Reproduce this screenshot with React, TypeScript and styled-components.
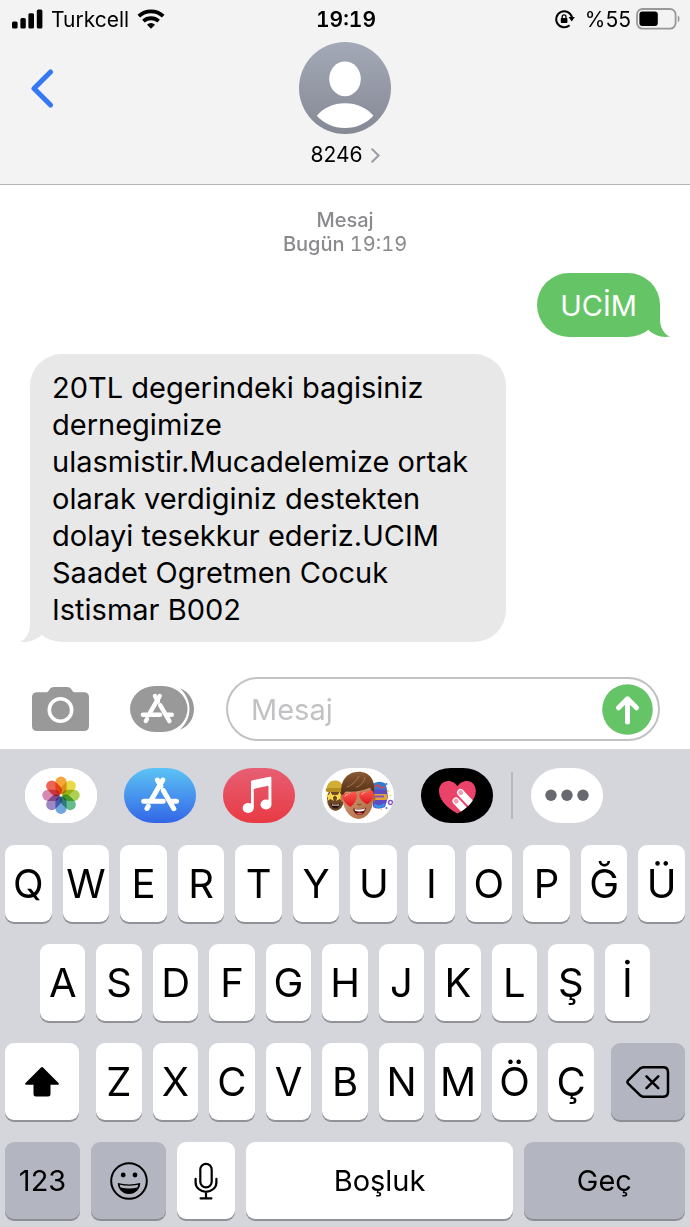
import React from "react";
import styled, { createGlobalStyle } from "styled-components";

const GlobalStyle = createGlobalStyle`
  * { box-sizing: border-box; }
  body { margin: 0; background: #fff; }
  button, input { font: inherit; color: inherit; }
  button { margin: 0; padding: 0; border: 0; background: none; cursor: pointer; }
  svg { display: block; flex: none; }
`;

const Screen = styled.div`
  font-family: Inter, "Liberation Sans", sans-serif;
  color: #000;
  background: #fff;
  min-width: 560px;
`;

/* ---------- header ---------- */

const Header = styled.header`
  background: #f3f3f3;
  border-bottom: 1px solid #b4b4b6;
`;

const StatusBar = styled.div`
  display: grid;
  grid-template-columns: 1fr auto 1fr;
  align-items: center;
  height: 38px;
  padding: 0 10px 0 12px;
  font-size: 21px;
`;

const StatusGroup = styled.div<{ $end?: boolean }>`
  display: flex;
  align-items: center;
  justify-content: ${(p) => (p.$end ? "flex-end" : "flex-start")};
  gap: ${(p) => (p.$end ? 5 : 8)}px;
`;

const Clock = styled.time`
  font-weight: 600;
  font-variant-numeric: tabular-nums;
`;

const LockSlot = styled.span`
  padding-right: 5px;
`;

const ContactBar = styled.div`
  display: grid;
  grid-template-columns: 1fr auto 1fr;
  height: 146px;
  padding-top: 4px;
`;

const BackButton = styled.button`
  justify-self: start;
  align-self: start;
  padding: 26px 30px;
`;

const Contact = styled.button`
  display: flex;
  flex-direction: column;
  align-items: center;
  gap: 9px;
  align-self: start;
`;

const ContactName = styled.span`
  display: flex;
  align-items: center;
  gap: 8px;
  font-size: 21px;
  line-height: 24px;
`;

/* ---------- conversation ---------- */

const Conversation = styled.main`
  display: flex;
  flex-direction: column;
  padding: 23px 30px 35px;
  gap: 17px;
`;

const Stamp = styled.p`
  margin: 0;
  text-align: center;
  color: #8a8a8e;
  font-size: 20px;
  line-height: 24px;
  font-variant-numeric: tabular-nums;
`;

const StampStrong = styled.span`
  font-weight: 500;
`;

const Bubble = styled.div<{ $sent?: boolean }>`
  position: relative;
  align-self: ${(p) => (p.$sent ? "flex-end" : "flex-start")};
  max-width: 476px;
  padding: ${(p) => (p.$sent ? "14px 23px 13px" : "15px 22px 14px")};
  border-radius: 32px;
  background: ${(p) => (p.$sent ? "#65c466" : "#e8e8e9")};
  color: ${(p) => (p.$sent ? "#fff" : "#000")};
  font-size: 29px;
  line-height: 37px;
`;

const Tail = styled.svg<{ $sent?: boolean }>`
  position: absolute;
  bottom: 0;
  ${(p) => (p.$sent ? "right: -10px;" : "left: -10px; transform: scaleX(-1);")}
`;

/* ---------- composer ---------- */

const Composer = styled.form`
  display: flex;
  align-items: center;
  padding: 0 30px 8px 32px;
`;

const ComposerButton = styled.button<{ $gap: number }>`
  margin-right: ${(p) => p.$gap}px;
`;

const Field = styled.div`
  flex: 1;
  min-width: 0;
  display: flex;
  align-items: center;
  height: 64px;
  padding: 0 5px 0 23px;
  border: 2px solid #c2c2c4;
  border-radius: 32px;
`;

const MessageInput = styled.input`
  flex: 1;
  min-width: 0;
  padding: 0;
  border: 0;
  outline: 0;
  background: none;
  font-size: 29px;
  line-height: 37px;
  &::placeholder {
    color: #c2c2c4;
    opacity: 1;
  }
`;

/* ---------- keyboard ---------- */

const Keyboard = styled.section`
  background: #d5d6dc;
  padding: 19px 5px 8px;
`;

const AppStrip = styled.nav`
  display: flex;
  align-items: center;
  gap: 27px;
  padding: 0 20px;
  margin-bottom: 22px;
`;

const AppButton = styled.button<{ $fill: string }>`
  width: 72px;
  height: 55px;
  border-radius: 30px / 27px;
  overflow: hidden;
  background: ${(p) => p.$fill};
`;

const MoreGroup = styled.div`
  display: flex;
  align-items: center;
  gap: 18px;
  margin-left: -9px;
`;

const Divider = styled.span`
  width: 2px;
  height: 47px;
  background: #b7b8bf;
`;

const Keys = styled.div`
  display: flex;
  flex-direction: column;
  gap: 22px;
`;

const KeyRow = styled.div<{ $inset?: number }>`
  display: flex;
  gap: 11px;
  padding: 0 ${(p) => p.$inset ?? 0}px;
`;

const LetterGroup = styled.div`
  flex: 497;
  display: flex;
  gap: 11px;
  margin: 0 6px;
`;

const Key = styled.button<{ $grow?: number; $dark?: boolean; $label?: boolean }>`
  flex: ${(p) => p.$grow ?? 1} 1 0;
  min-width: 0;
  display: flex;
  align-items: center;
  justify-content: center;
  height: 77px;
  border-radius: 9px;
  background: ${(p) => (p.$dark ? "#b3b6c0" : "#fff")};
  box-shadow: 0 2px 0 ${(p) => (p.$dark ? "#8d8f96" : "#919297")};
  font-size: ${(p) => (p.$label ? 29 : 40)}px;
`;

/* ---------- drawings ---------- */

const SignalIcon = () => (
  <svg width="31" height="20" viewBox="0 0 31 20" aria-hidden="true">
    <rect x="0" y="12.5" width="5.6" height="7" rx="1.5" />
    <rect x="8.4" y="9" width="5.4" height="10.5" rx="1.5" />
    <rect x="16.4" y="4.3" width="5.6" height="15.2" rx="1.5" />
    <rect x="24.8" y="0.4" width="5.6" height="19.1" rx="1.5" />
  </svg>
);

const WifiIcon = () => (
  <svg width="28" height="20" viewBox="0 0 28 20" aria-hidden="true">
    <g fill="none" stroke="#000" strokeWidth="3.8">
      <path d="M1.800 7.200a18 18 0 0 1 24.400 0" />
      <path d="M6.400 12.200a11.200 11.200 0 0 1 15.200 0" />
    </g>
    <path d="M14 19.800l-4-4.100a5.800 5.800 0 0 1 8 0z" />
  </svg>
);

const RotationLockIcon = () => (
  <svg width="20" height="20" viewBox="0 0 20 20" aria-hidden="true">
    <path d="M14.6 16.2A8 8 0 1 1 17 8.4" fill="none" stroke="#000" strokeWidth="2" />
    <path d="M13.6 8h6.2l-3.1 4.4z" />
    <rect x="5.8" y="9" width="6.6" height="5" rx=".8" />
    <path d="M7.2 9.4V7.7a1.9 1.9 0 0 1 3.8 0v1.7" fill="none" stroke="#000" strokeWidth="1.3" />
  </svg>
);

const BatteryIcon = () => (
  <svg width="44" height="22" viewBox="0 0 44 22" aria-hidden="true">
    <rect x="1" y="1" width="38.6" height="19.6" rx="5.5" fill="none" stroke="#98989a" strokeWidth="1.8" />
    <rect x="3.4" y="3.6" width="18.4" height="14.4" rx="3" />
    <path d="M41.8 7.6c2.3 1 2.3 5.6 0 6.6z" fill="#98989a" />
  </svg>
);

const BackIcon = () => (
  <svg width="24" height="40" viewBox="0 0 24 40" fill="none" stroke="#3478f6" strokeWidth="5" strokeLinecap="round" strokeLinejoin="round" aria-hidden="true">
    <path d="M20.5 4L4 20.4 20.5 37" />
  </svg>
);

const AvatarIcon = () => (
  <svg width="92" height="92" viewBox="0 0 92 92" aria-hidden="true">
    <defs>
      <linearGradient id="avatar" x1="0" y1="0" x2="0" y2="1">
        <stop offset="0" stopColor="#a4a9b7" />
        <stop offset="1" stopColor="#858994" />
      </linearGradient>
    </defs>
    <circle cx="46" cy="46" r="46" fill="url(#avatar)" />
    <ellipse cx="46" cy="36.8" rx="15.8" ry="17.4" fill="#fff" />
    <path d="M17.8 73.8C24 66 34 61.2 46 61.2S68 66 74.4 73.8C67 81.6 57.500 86 46 86S25 81.600 17.800 73.800z" fill="#fff" />
  </svg>
);

const DisclosureIcon = () => (
  <svg width="9" height="15" viewBox="0 0 9 15" fill="none" stroke="#9a9ca3" strokeWidth="2" strokeLinecap="round" aria-hidden="true">
    <path d="M1.2 1.2L7.600 7.500 1.200 13.800" />
  </svg>
);

const BubbleTail = ({ sent }: { sent?: boolean }) => (
  <Tail $sent={sent} width="24" height="34" viewBox="0 0 24 34" aria-hidden="true">
    <path d="M14 0V16C14 24 17.500 31 24 33.600C15 35.200 7.500 31.500 2.500 27L0 18L8 0z" fill={sent ? "#65c466" : "#e8e8e9"} />
  </Tail>
);

const CameraIcon = () => (
  <svg width="57" height="44" viewBox="0 0 57 44" aria-hidden="true">
    <path d="M5 5.200h9.500c1.400 0 1.800-.8 2.800-2.400C18.500 1 19.500 0 22 0h13c2.500 0 3.500 1 4.700 2.800 1 1.600 1.400 2.400 2.800 2.400H52c3.200 0 5 1.800 5 5V39c0 3.200-1.800 5-5 5H5c-3.200 0-5-1.800-5-5V10.200c0-3.200 1.800-5 5-5z" fill="#999" />
    <circle cx="28.500" cy="23" r="11.200" fill="none" stroke="#fff" strokeWidth="3.600" />
  </svg>
);

const StoreMark = () => (
  <g fill="none" stroke="#fff" strokeWidth="5" strokeLinecap="round">
    <path d="M38.800 12L27.800 31" />
    <path d="M24.300 38.200l-1.300 2.300" />
    <path d="M19.700 33.300h19.500M47.800 33.300h4.700" />
    <path d="M33.400 12l3.400 6.200M39.300 22.500L49.800 40.700" />
  </g>
);

const AppsToggleIcon = () => (
  <svg width="65" height="46" viewBox="0 0 65 46" aria-hidden="true">
    <path d="M50 2.200C58.500 5.500 64 13.500 64 23S58.500 40.500 50 43.800C56 38 59.500 31 59.500 23S56 8 50 2.200z" fill="#999" />
    <rect width="57.500" height="46" rx="25" ry="23" fill="#999" />
    <g transform="translate(-4.400 -.6) scale(.88)">
      <StoreMark />
    </g>
  </svg>
);

const SendIcon = () => (
  <svg width="51" height="51" viewBox="0 0 51 51" aria-hidden="true">
    <circle cx="25.500" cy="25.500" r="25.300" fill="#65c466" />
    <path d="M25.500 38V15M16.500 23.800l9-9 9 9" fill="none" stroke="#fff" strokeWidth="5" strokeLinecap="round" strokeLinejoin="round" />
  </svg>
);

const PETALS = ["#f29a1f", "#e2d52b", "#a1c938", "#4fb37c", "#5b9bd8", "#8d78bd", "#d07aa8", "#ea4d3d"];

const Petal = styled.rect`
  mix-blend-mode: multiply;
`;

const PhotosIcon = () => (
  <svg width="72" height="55" viewBox="0 0 72 55" aria-hidden="true">
    <rect width="72" height="55" fill="#fff" />
    <g transform="translate(36 27.300)">
      {PETALS.map((color, i) => (
        <Petal key={color} x="-5.600" y="-18.700" width="11.200" height="17.600" rx="5.600" fill={color} fillOpacity=".88" transform={`rotate(${i * 45})`} />
      ))}
    </g>
  </svg>
);

const StoreIcon = () => (
  <svg width="72" height="55" viewBox="0 0 72 55" aria-hidden="true">
    <StoreMark />
  </svg>
);

const MusicIcon = () => (
  <svg width="72" height="55" viewBox="0 0 72 55" fill="#fff" aria-hidden="true">
    <path d="M28 14.200c0-1.100.6-1.700 1.700-1.900L46.800 8.700c1-.2 1.600.3 1.600 1.300V35.500h-2.900V17.700L30.800 20.900V39.500H28z" />
    <ellipse cx="25.200" cy="40" rx="5.600" ry="5" />
    <ellipse cx="43" cy="36.500" rx="5.500" ry="5" />
  </svg>
);

const MemojiIcon = () => (
  <svg width="72" height="55" viewBox="0 0 72 55" aria-hidden="true">
    <defs>
      <linearGradient id="skin" x1="0" y1="0" x2="1" y2="1">
        <stop offset="0" stopColor="#d9a07a" />
        <stop offset="1" stopColor="#a9683f" />
      </linearGradient>
      <linearGradient id="hair" x1="0" y1="0" x2="0" y2="1">
        <stop offset="0" stopColor="#8a5a34" />
        <stop offset="1" stopColor="#4f2d17" />
      </linearGradient>
      <linearGradient id="love" x1="0" y1="0" x2="0" y2="1">
        <stop offset="0" stopColor="#ff5a4d" />
        <stop offset="1" stopColor="#dc1420" />
      </linearGradient>
    </defs>
    <ellipse cx="13.500" cy="31" rx="8.500" ry="11.800" fill="#6b4526" />
    <path d="M4.500 22C4.500 15.500 8.500 12.500 13 12.500S21 15 21.500 22z" fill="#d2ac35" />
    <rect x="3.600" y="20" width="18" height="4" rx="2" fill="#b48d22" />
    <path d="M8.500 23.500l1.500 3.200 3.400.3-2.500 2.400.8 3.500-3.200-1.800-3.200 1.800.8-3.500-2.700-2.400 3.600-.3zM17.500 23.500l1.500 3.200 3.400.3-2.500 2.400.8 3.500-3.200-1.800-3.200 1.800.8-3.500-2.500-2.400 3.400-.3z" fill="#f7d84c" />
    <path d="M8.500 35.500q5 2 9.500 0-1 5-4.500 5t-5-5z" fill="#2c130c" />
    <path d="M10 36.200q3.500 1 7 0v1.300h-7z" fill="#fff" />
    <path d="M51 17q7-5 13 0l2 12-3 10q-7 3-12 0z" fill="#5c4cc4" />
    <path d="M51 15.500q7-3.500 12.500 0l1 6H51z" fill="#2f7fd0" />
    <path d="M52 19l4-2 3 3 4-1" stroke="#e83e54" strokeWidth="1.500" fill="none" />
    <rect x="50" y="26" width="15.500" height="6" rx="2" fill="#e8a233" />
    <rect x="52" y="27.500" width="10" height="2" fill="#7d55c7" />
    <path d="M52 37q6 4 11-1" stroke="#3a8de2" strokeWidth="3" fill="none" />
    <circle cx="68.500" cy="34.500" r="2" fill="none" stroke="#8a52c8" strokeWidth="1.500" />
    <circle cx="64.500" cy="16" r="1" fill="#3f74de" />
    <circle cx="66" cy="23" r="1" fill="#f0cf31" />
    <circle cx="68.500" cy="27.500" r=".8" fill="#f0cf31" />
    <circle cx="64.500" cy="40" r="1" fill="#3f74de" />
    <circle cx="59.500" cy="41.500" r=".8" fill="#f0cf31" />
    <ellipse cx="20.800" cy="30" rx="2.400" ry="4" fill="#b97a50" />
    <ellipse cx="51" cy="30" rx="2.400" ry="4" fill="#a9683f" />
    <path d="M21 21q15-12 30 0v12c0 9-7 18-14.500 18S21.500 42 21 33z" fill="url(#skin)" />
    <path d="M19.500 27C17.500 13 25 4 36.500 3.800 47.500 3.800 54.500 12 51.500 27l-2-1.500Q50 22 48 19.500 38 24.500 24 23.500q-2 1-2.500 3.500z" fill="url(#hair)" />
    <path d="M25 19Q33 16 37 8M34 19.500Q42 16 43 9" stroke="#a8754a" strokeWidth="1" fill="none" />
    <path d="M28.600 39C24 36 20.800 32.500 20.500 29c-.2-4 5-5.500 7-2 1.400-4 7-4.500 7.500.3.300 4-3 8.700-6.400 11.700z" fill="url(#love)" />
    <path d="M45.200 36.500C41 34 37.600 31 37.200 27.500c-.4-4.200 5-5.500 7-2.200 1.300-4 7-4.200 7.500.5.300 4-3 8-6.500 10.700z" fill="url(#love)" />
    <path d="M23 28.500q.5-2.500 2.500-2M40 26.500q.5-2.500 2.500-2" stroke="#ffaba2" strokeWidth="1" fill="none" strokeLinecap="round" />
    <path d="M35.500 36q1.800 1.500 3.800 0" stroke="#8b4d2c" strokeWidth="1.200" fill="none" />
    <path d="M31 40.500q7 2 13-1-1 7.500-6.500 7.500T31 40.500z" fill="#5d1717" />
    <path d="M32.500 41q6 1.500 10.500-.700l-.6 2.200q-5 1.800-9.300.3z" fill="#fff" />
    <path d="M34.500 45.500q3-1.500 6 0-2.500 1.800-6 0z" fill="#ec6470" />
  </svg>
);

const TouchIcon = () => (
  <svg width="72" height="55" viewBox="0 0 72 55" aria-hidden="true">
    <defs>
      <clipPath id="heart">
        <path d="M36.500 45.500C28 41 18 33 18 23c0-6.500 4.500-10 9-10 4.300 0 7.600 2.500 9.500 5.200C38.400 15.500 41.500 13 46 13c5 0 8.800 4 8.800 10 0 10-9.800 18-18.300 22.500z" />
      </clipPath>
    </defs>
    <g clipPath="url(#heart)">
      <rect width="72" height="55" fill="#eb4269" />
      <g transform="rotate(-43 39.500 24.500)">
        <rect x="36" y="21" width="7" height="30" rx="3.500" fill="#fff" />
        <rect x="37.300" y="22.200" width="4.400" height="5" rx="2" fill="#f59bae" />
      </g>
      <g transform="rotate(-43 35 33)">
        <rect x="31.500" y="29.500" width="7" height="30" rx="3.500" fill="#fff" />
        <rect x="32.800" y="30.700" width="4.400" height="5" rx="2" fill="#f59bae" />
      </g>
    </g>
  </svg>
);

const MoreIcon = () => (
  <svg width="72" height="55" viewBox="0 0 72 55" fill="#68696f" aria-hidden="true">
    <circle cx="20" cy="27.300" r="5.700" />
    <circle cx="36" cy="27.300" r="5.700" />
    <circle cx="52" cy="27.300" r="5.700" />
  </svg>
);

const ShiftIcon = () => (
  <svg width="36" height="32" viewBox="0 0 36 32" aria-hidden="true">
    <path d="M17 1.500q1-1 2 0L34.500 17q1 1.800-1 1.800h-7V28q0 2.500-2.500 2.500H12q-2.500 0-2.500-2.500v-9.200h-7q-2 0-1-1.800z" />
  </svg>
);

const BackspaceIcon = () => (
  <svg width="44" height="32" viewBox="0 0 44 32" fill="none" stroke="#000" strokeWidth="2.500" strokeLinecap="round" strokeLinejoin="round" aria-hidden="true">
    <path d="M14.500 2.200Q16 1.200 18 1.200h19q5 0 5 5v19.600q0 5-5 5H18q-2 0-3.500-1.200L2.200 17.600q-1.500-1.600 0-3.200z" />
    <path d="M20.500 10.300l11.800 11.800M32.300 10.300L20.500 22.100" />
  </svg>
);

const SmileyIcon = () => (
  <svg width="38" height="38" viewBox="0 0 38 38" aria-hidden="true">
    <circle cx="19" cy="19" r="17.800" fill="none" stroke="#000" strokeWidth="2" />
    <circle cx="13.200" cy="13" r="2.400" />
    <circle cx="25" cy="13" r="2.400" />
    <path d="M7.800 21q11 2.800 22.400 0c.2 6-4.700 11-11.200 11S7.800 27 7.800 21z" />
    <path d="M9.800 22.800q9.200 1.900 18.400 0-.2 1.500-.9 2.800-8.300 1.800-16.600 0-.8-1.400-.9-2.800z" fill="#b3b6c0" />
  </svg>
);

const MicIcon = () => (
  <svg width="24" height="38" viewBox="0 0 24 38" fill="none" stroke="#000" strokeWidth="2.200" strokeLinecap="round" aria-hidden="true">
    <rect x="6.300" y="1.800" width="11.400" height="23.600" rx="5.700" />
    <path d="M1.600 16.800v3.600a10.400 9.400 0 0 0 20.800 0v-3.600M12 30v6M6.600 36.400h10.800" />
  </svg>
);

/* ---------- page ---------- */

const ROW_TOP = ["Q", "W", "E", "R", "T", "Y", "U", "I", "O", "P", "Ğ", "Ü"];
const ROW_HOME = ["A", "S", "D", "F", "G", "H", "J", "K", "L", "Ş", "İ"];
const ROW_BOTTOM = ["Z", "X", "C", "V", "B", "N", "M", "Ö", "Ç"];

const APPS = [
  { name: "Fotoğraflar", fill: "#fff", Icon: PhotosIcon },
  { name: "App Store", fill: "linear-gradient(#5cc3f5, #3366e6)", Icon: StoreIcon },
  { name: "Müzik", fill: "linear-gradient(#e75f73, #e83a44)", Icon: MusicIcon },
  { name: "Memoji", fill: "#fff", Icon: MemojiIcon },
  { name: "Digital Touch", fill: "#000", Icon: TouchIcon },
];

const Letters = ({ letters }: { letters: string[] }) => (
  <>
    {letters.map((letter) => (
      <Key key={letter} type="button">{letter}</Key>
    ))}
  </>
);

export default function App() {
  return (
    <Screen lang="tr">
      <GlobalStyle />
      <Header>
        <StatusBar>
          <StatusGroup>
            <SignalIcon />
            <span>Turkcell</span>
            <WifiIcon />
          </StatusGroup>
          <Clock>19:19</Clock>
          <StatusGroup $end>
            <LockSlot><RotationLockIcon /></LockSlot>
            <span>%55</span>
            <BatteryIcon />
          </StatusGroup>
        </StatusBar>
        <ContactBar>
          <BackButton type="button" aria-label="Geri"><BackIcon /></BackButton>
          <Contact type="button">
            <AvatarIcon />
            <ContactName>
              8246
              <DisclosureIcon />
            </ContactName>
          </Contact>
        </ContactBar>
      </Header>

      <Conversation>
        <Stamp>
          <StampStrong>Mesaj</StampStrong>
          <br />
          <StampStrong>Bugün</StampStrong> 19:19
        </Stamp>
        <Bubble $sent>
          UCİM
          <BubbleTail sent />
        </Bubble>
        <Bubble>
          20TL degerindeki bagisiniz dernegimize ulasmistir.Mucadelemize ortak olarak verdiginiz destekten dolayi tesekkur ederiz.UCIM Saadet Ogretmen Cocuk Istismar B002
          <BubbleTail />
        </Bubble>
      </Conversation>

      <Composer onSubmit={(e) => e.preventDefault()}>
        <ComposerButton type="button" $gap={41} aria-label="Kamera"><CameraIcon /></ComposerButton>
        <ComposerButton type="button" $gap={31} aria-label="Uygulamalar"><AppsToggleIcon /></ComposerButton>
        <Field>
          <MessageInput type="text" placeholder="Mesaj" aria-label="Mesaj" />
          <button type="submit" aria-label="Gönder"><SendIcon /></button>
        </Field>
      </Composer>

      <Keyboard aria-label="Klavye">
        <AppStrip aria-label="iMessage uygulamaları">
          {APPS.map(({ name, fill, Icon }) => (
            <AppButton key={name} type="button" $fill={fill} aria-label={name}><Icon /></AppButton>
          ))}
          <MoreGroup>
            <Divider />
            <AppButton type="button" $fill="#fff" aria-label="Daha fazla"><MoreIcon /></AppButton>
          </MoreGroup>
        </AppStrip>
        <Keys>
          <KeyRow><Letters letters={ROW_TOP} /></KeyRow>
          <KeyRow $inset={35}><Letters letters={ROW_HOME} /></KeyRow>
          <KeyRow>
            <Key type="button" $grow={74} aria-label="Büyük harf"><ShiftIcon /></Key>
            <LetterGroup><Letters letters={ROW_BOTTOM} /></LetterGroup>
            <Key type="button" $grow={74} $dark aria-label="Sil"><BackspaceIcon /></Key>
          </KeyRow>
          <KeyRow>
            <Key type="button" $grow={75} $dark $label>123</Key>
            <Key type="button" $grow={75} $dark aria-label="Emoji"><SmileyIcon /></Key>
            <Key type="button" $grow={58} aria-label="Dikte"><MicIcon /></Key>
            <Key type="button" $grow={266} $label>Boşluk</Key>
            <Key type="button" $grow={161} $dark $label>Geç</Key>
          </KeyRow>
        </Keys>
      </Keyboard>
    </Screen>
  );
}
